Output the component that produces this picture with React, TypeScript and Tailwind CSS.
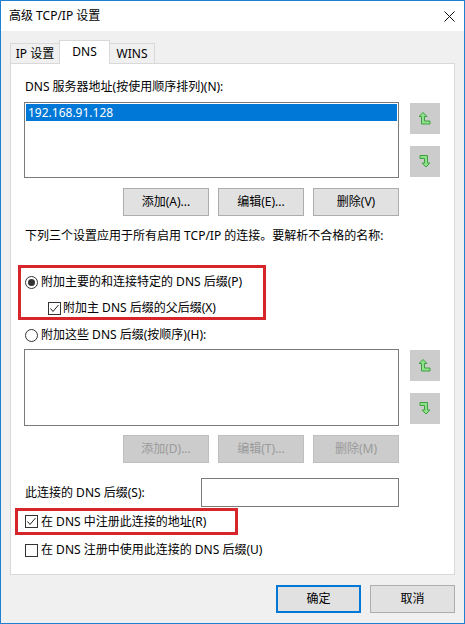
import React from "react";

const UpIcon = () => (
  <svg width="12" height="13" viewBox="0 0 12 13">
    <polygon
      points="4,0.5 8,4.5 5.5,4.5 5.5,9 11,9 11,12 2.5,12 2.5,4.5 0,4.5"
      fill="#8ee08a"
      stroke="#3f9f3f"
      strokeWidth="1"
      strokeLinejoin="miter"
    />
  </svg>
);

const DownIcon = () => (
  <svg width="12" height="13" viewBox="0 0 12 13">
    <polygon
      points="1,0.5 8.5,0.5 8.5,8 11,8 7,12 3,8 5.5,8 5.5,3.5 1,3.5"
      fill="#8ee08a"
      stroke="#3f9f3f"
      strokeWidth="1"
    />
  </svg>
);

const Radio = ({ checked }: { checked?: boolean }) => (
  <svg width="13" height="13" viewBox="0 0 13 13" className="shrink-0">
    <circle cx="6.5" cy="6.5" r="6" fill="white" stroke="#333" strokeWidth="1" />
    {checked && <circle cx="6.5" cy="6.5" r="3.5" fill="#333" />}
  </svg>
);

const Check = ({ checked }: { checked?: boolean }) => (
  <svg width="13" height="13" viewBox="0 0 13 13" className="shrink-0">
    <rect x="0.5" y="0.5" width="12" height="12" fill="white" stroke="#333" strokeWidth="1" />
    {checked && (
      <polyline points="2.5,6.5 5,9.5 10.5,3" fill="none" stroke="#222" strokeWidth="1" />
    )}
  </svg>
);

const Btn = ({ label, disabled }: { label: string; disabled?: boolean }) => (
  <div
    className={
      disabled
        ? "w-[86px] h-[28px] flex items-center justify-center bg-[#cccccc] border border-[#bfbfbf] text-[#9a9a9a]"
        : "w-[86px] h-[28px] flex items-center justify-center bg-[#e1e1e1] border border-[#adadad]"
    }
  >
    {label}
  </div>
);

const Arrows = () => (
  <div className="flex flex-col gap-[12px] ml-[11px] pt-px">
    <div className="w-[30px] h-[31px] bg-[#cccccc] flex items-center justify-center">
      <UpIcon />
    </div>
    <div className="w-[30px] h-[31px] bg-[#cccccc] flex items-center justify-center">
      <DownIcon />
    </div>
  </div>
);

export default function App() {
  return (
    <div className="w-[465px] h-[624px] border border-[#1f7fd0] bg-[#f0f0f0] flex flex-col text-[12px] leading-[16px] text-black font-['Noto_Sans','Noto_Sans_CJK_SC',sans-serif]">
      {/* title bar */}
      <div className="h-[30px] bg-white flex items-center justify-between pl-[8px] pr-[9px] shrink-0">
        <span>高级 TCP/IP 设置</span>
        <svg width="11" height="11" viewBox="0 0 11 11">
          <path d="M0.5 0.5 L10.5 10.5 M10.5 0.5 L0.5 10.5" stroke="#111" strokeWidth="1" />
        </svg>
      </div>

      <div className="px-[9px] pt-[9px]">
        {/* tabs */}
        <div className="flex items-end">
          <div className="w-[49px] h-[20px] flex items-center justify-center border-l border-t border-[#d9d9d9] bg-[#f0f0f0]">
            IP 设置
          </div>
          <div className="relative z-10 w-[51px] h-[24px] -mb-px flex items-center justify-center border-l border-t border-r border-[#d9d9d9] bg-white pb-px">
            DNS
          </div>
          <div className="w-[45px] h-[20px] flex items-center justify-center border-t border-r border-[#d9d9d9] bg-[#f0f0f0]">
            WINS
          </div>
        </div>

        {/* panel */}
        <div className="h-[512px] bg-white border border-[#d9d9d9] pl-[13px] pt-[15px] flex flex-col">
          <div className="ml-px">DNS 服务器地址(按使用顺序排列)(N):</div>

          <div className="flex mt-[7px]">
            <div className="w-[375px] h-[76px] border border-[#7a7a7a] p-px">
              <div className="h-[17px] bg-[#0078d7] text-white pl-[2px] flex items-center">
                192.168.91.128
              </div>
            </div>
            <Arrows />
          </div>

          <div className="w-[375px] flex justify-end gap-[9px] mt-[10px]">
            <Btn label="添加(A)..." />
            <Btn label="编辑(E)..." />
            <Btn label="删除(V)" />
          </div>

          <div className="ml-px mt-[12px]">
            下列三个设置应用于所有启用 TCP/IP 的连接。要解析不合格的名称:
          </div>

          <div className="-ml-[6px] mt-[21px] w-[248px] border-[3px] border-[#d7252c] pl-[4px] pt-[6px] pb-px">
            <div className="flex items-center h-[16px] gap-[3px]">
              <Radio checked />
              <span>附加主要的和连接特定的 DNS 后缀(P)</span>
            </div>
            <div className="flex items-center h-[16px] gap-[2px] mt-[10px] pl-[23px]">
              <Check checked />
              <span>附加主 DNS 后缀的父后缀(X)</span>
            </div>
          </div>

          <div className="flex items-center h-[16px] gap-[3px] mt-[7px] ml-px">
            <Radio />
            <span>附加这些 DNS 后缀(按顺序)(H):</span>
          </div>

          <div className="flex mt-[6px]">
            <div className="w-[375px] h-[77px] border border-[#7a7a7a]" />
            <Arrows />
          </div>

          <div className="w-[375px] flex justify-end gap-[9px] mt-[9px]">
            <Btn label="添加(D)..." disabled />
            <Btn label="编辑(T)..." disabled />
            <Btn label="删除(M)" disabled />
          </div>

          <div className="flex items-center mt-[15px]">
            <div className="w-[176px] ml-px">此连接的 DNS 后缀(S):</div>
            <div className="w-[198px] h-[29px] border border-[#7a7a7a]" />
          </div>

          <div className="-ml-[9px] mt-px w-[223px] h-[27px] border-[3px] border-[#d7252c] pl-[7px] flex items-center gap-[3px]">
            <Check checked />
            <span>在 DNS 中注册此连接的地址(R)</span>
          </div>

          <div className="flex items-center h-[16px] gap-[3px] mt-[7px] ml-px">
            <Check />
            <span>在 DNS 注册中使用此连接的 DNS 后缀(U)</span>
          </div>
        </div>
      </div>

      {/* footer */}
      <div className="flex justify-end gap-[9px] pr-[9px] mt-[10px]">
        <div className="w-[85px] h-[28px] flex items-center justify-center bg-[#e1e1e1] border-2 border-[#0078d7]">
          确定
        </div>
        <div className="w-[85px] h-[28px] flex items-center justify-center bg-[#e1e1e1] border border-[#adadad]">
          取消
        </div>
      </div>
    </div>
  );
}
